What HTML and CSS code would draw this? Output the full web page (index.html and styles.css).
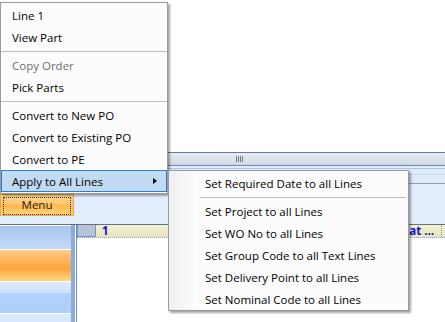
FILE: index.html
```html
<!DOCTYPE html>
<html lang="en">
<head>
<meta charset="UTF-8" />
<title>Order Lines</title>
<link rel="stylesheet" href="styles.css">
</head>
<body>

<div class="app">
  <div class="top-area"></div>

  <div class="splitter">
    <span class="grip"></span>
  </div>

  <div class="tool-panel">
    <button class="menu-btn"><span>Menu</span></button>
  </div>

  <div class="lower">
    <div class="side">
      <div class="side-row"></div>
      <div class="side-row active"></div>
      <div class="side-row"></div>
      <div class="side-row"></div>
    </div>
    <div class="side-bar"></div>
    <div class="grid">
      <div class="grid-row">
        <div class="row-head"></div>
        <div class="cell num">1</div>
        <div class="cell fill"></div>
        <div class="cell desc">cat ...</div>
        <div class="cell last"></div>
      </div>
    </div>
  </div>
</div>

<!-- context menu -->
<ul class="ctx-menu main">
  <li>Line 1</li>
  <li>View Part</li>
  <li class="sep"></li>
  <li class="disabled">Copy Order</li>
  <li>Pick Parts</li>
  <li class="sep"></li>
  <li>Convert to New PO</li>
  <li>Convert to Existing PO</li>
  <li>Convert to PE</li>
  <li class="open has-sub">Apply to All Lines</li>
</ul>

<ul class="ctx-menu sub">
  <li>Set Required Date to all Lines</li>
  <li class="sep"></li>
  <li>Set Project to all Lines</li>
  <li>Set WO No to all Lines</li>
  <li>Set Group Code to all Text Lines</li>
  <li>Set Delivery Point to all Lines</li>
  <li>Set Nominal Code to all Lines</li>
</ul>

</body>
</html>
```

FILE: styles.css
```css
body {
  margin: 0;
  width: 445px;
  height: 322px;
  overflow: hidden;
  position: relative;
  font-family: 'Open Sans', 'Noto Sans', sans-serif;
  font-size: 11.5px;
  color: #000;
  background: #fff;
}

.top-area {
  height: 152px;
  background: #fff;
}

.splitter {
  height: 12px;
  border-top: 1px solid #6279a6;
  border-bottom: 1px solid #6d86b3;
  background: linear-gradient(#e6ebf1, #cfd8e3);
  padding-left: 236px;
  display: flex;
  align-items: center;
}

.grip {
  width: 7px;
  height: 6px;
  background: repeating-linear-gradient(90deg, #6d7a8c 0 1px, transparent 1px 2px);
}

.tool-panel {
  height: 30px;
  padding-top: 28px;
  border-bottom: 1px solid #6b6e73;
  background:
    linear-gradient(#e2ecfa 0 2px, #a9c3ea 2px 3px, #dfeafa 3px 8px, #c6d8f2 8px 9px,
                    #e0ebfa 9px 17px, #8d9fb8 17px 18px, #e3eefc 18px);
}

.menu-btn {
  display: block;
  width: 74px;
  height: 22px;
  padding: 2px;
  border: 1px solid #f7a43a;
  background: linear-gradient(#ffdf9f, #ffc061 50%, #ffb54c 51%, #ffd47f);
  font: inherit;
  color: #1b1b1b;
}

.menu-btn span {
  display: block;
  height: 100%;
  border: 1px dotted #3b3326;
  line-height: 14px;
  text-align: center;
}

.lower {
  display: flex;
  height: 97px;
}

.side {
  width: 71px;
  padding-top: 1px;
}

.side-row {
  height: 23px;
  border-bottom: 1px solid #fff;
  background: linear-gradient(#a7c5ec, #c3daf8);
}

.side-row.active {
  height: 31px;
  background: linear-gradient(#ffcb8e, #ffae4a 45%, #ffa53f 60%, #ffd77c);
}

.side-row:nth-child(3) {
  height: 31px;
  background: linear-gradient(#dceafd, #cfe2fc 35%, #b0d1fb 36%, #aed0fb);
}

.side-row:nth-child(4) {
  background: linear-gradient(#dceafd, #d3e5fc);
}

.side-bar {
  width: 4px;
  background: #8aacd8;
  border-right: 1px solid #fff;
}

.grid {
  flex: 1;
  border-left: 1px solid #6592d6;
}

.grid-row {
  display: flex;
  height: 12px;
  border-bottom: 1px dotted #7f9fda;
  background: linear-gradient(#f2f0da, #e8e5b6);
}

.row-head {
  width: 17px;
  border: 1px solid #6f96cf;
  border-top: 0;
  background: #b7c4d7;
}

.cell {
  line-height: 12px;
  font-weight: bold;
  color: #1010d8;
  white-space: nowrap;
}

.num {
  padding-left: 6px;
  width: 20px;
}

.fill {
  flex: 1;
}

.desc {
  border-right: 1px dotted #8aa6d8;
  padding-right: 7px;
}

.last {
  width: 3px;
}

/* context menus */
.ctx-menu {
  position: absolute;
  list-style: none;
  margin: 0;
  padding: 1px 0;
  background: #fcfcfc;
  border: 1px solid #9a9a9a;
  box-shadow: 2px 2px 2px rgba(0, 0, 0, 0.35);
}

.ctx-menu li {
  height: 22px;
  line-height: 21px;
  padding-left: 10px;
  border: 1px solid transparent;
  box-sizing: border-box;
  white-space: nowrap;
  position: relative;
}

.ctx-menu li.sep {
  height: 6px;
  border: 0;
  padding: 3px 0 0;
}

.ctx-menu li.sep::after {
  content: '';
  display: block;
  height: 1px;
  background: #bdbdbd;
}

.ctx-menu li.disabled {
  color: #6d6d6d;
}

.ctx-menu li.open {
  background: #c0dbf3;
  border-color: #2a7ed6;
}

.ctx-menu li.has-sub::after {
  content: '';
  position: absolute;
  right: 9px;
  top: 7px;
  border-left: 4px solid #000;
  border-top: 3.5px solid transparent;
  border-bottom: 3.5px solid transparent;
}

.main {
  left: 0;
  top: 2px;
  width: 166px;
}

.sub {
  left: 168px;
  top: 170px;
  width: 239px;
  padding: 1px 0 0;
  background: linear-gradient(90deg, #f0f0f0, #fafafa 24px, #fcfcfc 24px);
}

.sub li {
  padding-left: 35px;
}

.sub li.sep::after {
  margin-left: 31px;
  margin-right: 2px;
}
```
